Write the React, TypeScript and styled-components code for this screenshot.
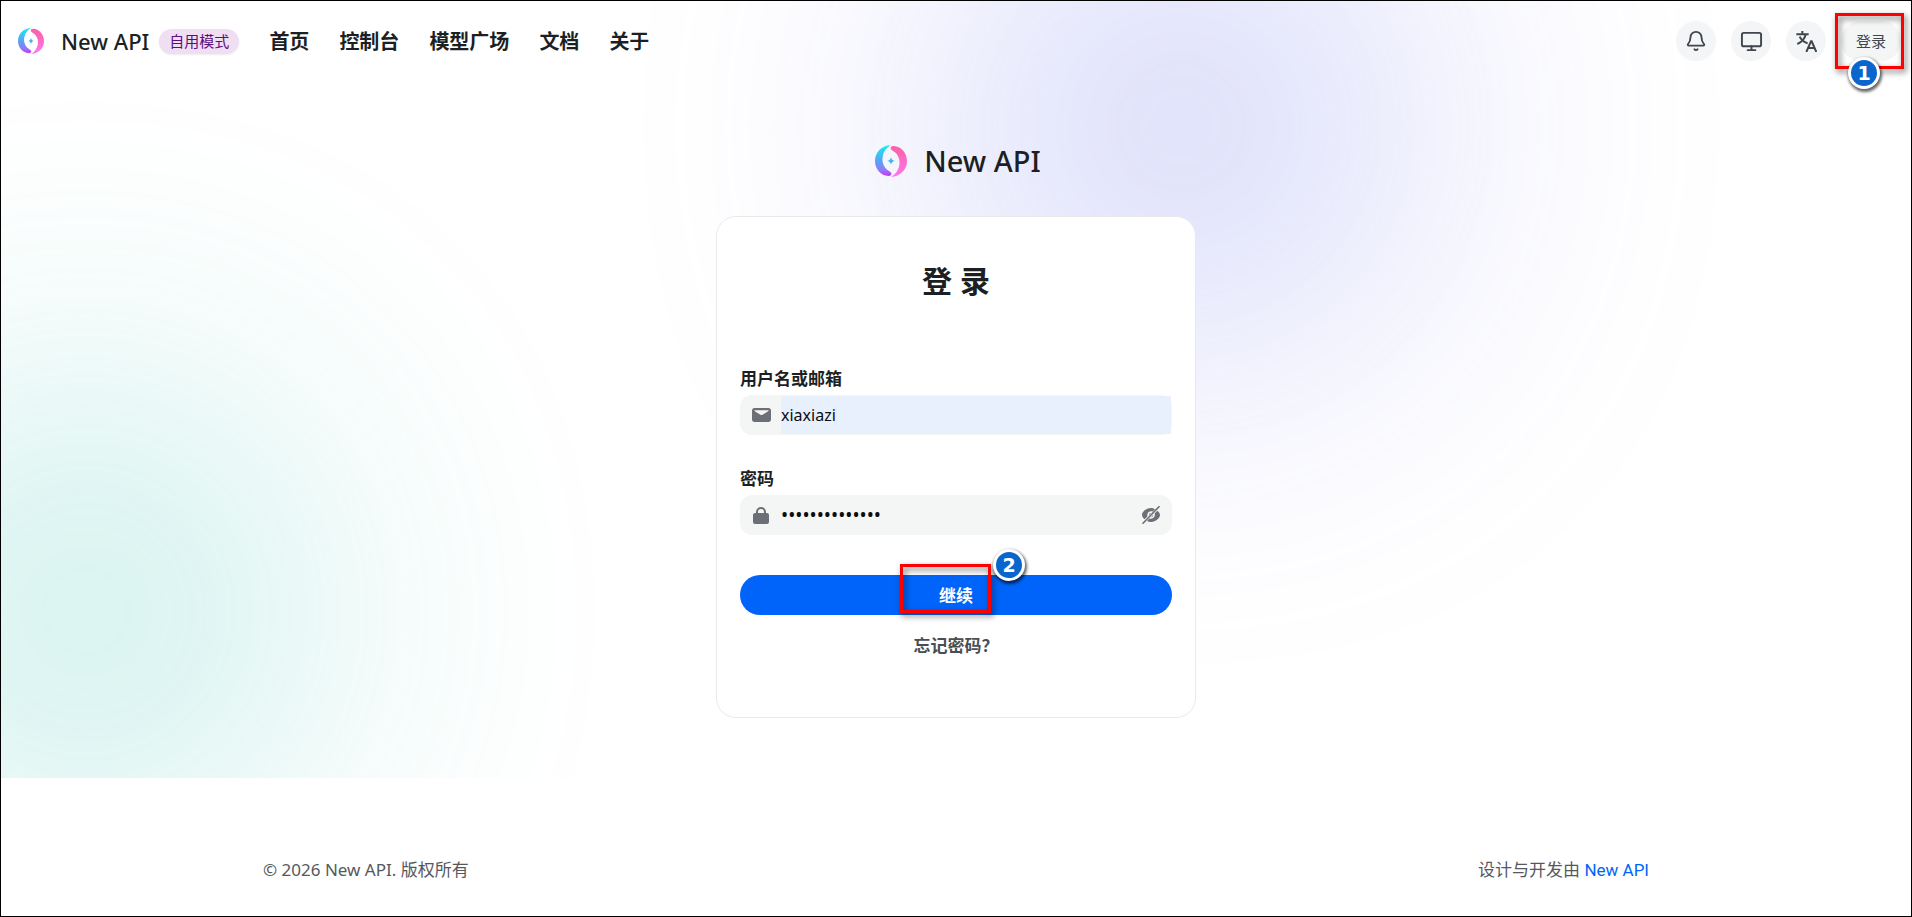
import React, { useId, useState } from 'react';
import styled, { createGlobalStyle } from 'styled-components';
import { Bell, Monitor } from 'lucide-react';

const sans = `'Noto Sans', 'Noto Sans CJK SC', sans-serif`;

const GlobalStyle = createGlobalStyle`
  *, *::before, *::after { box-sizing: border-box; }
  body {
    margin: 0;
    background: #fff;
    color: #1c1f23;
    font-family: ${sans};
    font-size: 17px;
    line-height: 24px;
  }
  button, input { font: inherit; }
`;

const Page = styled.div`
  display: flex;
  flex-direction: column;
  min-height: 100vh;
  border: 1px solid #000;
`;

const Hero = styled.div`
  position: relative;
  isolation: isolate;
  overflow: hidden;
`;

const Glow = styled.div<{ $color: string; $opacity: number; $top: number; $left: string }>`
  position: absolute;
  z-index: -1;
  top: ${(p) => p.$top}px;
  left: ${(p) => p.$left};
  width: 450px;
  height: 450px;
  border-radius: 50%;
  background: ${(p) => p.$color};
  opacity: ${(p) => p.$opacity};
  filter: blur(165px);
  pointer-events: none;
`;

const Header = styled.header`
  display: flex;
  align-items: center;
  justify-content: space-between;
  height: 80px;
  padding: 0 10px;
`;

const HeaderGroup = styled.div`
  display: flex;
  align-items: center;
  gap: 30px;
`;

const Brand = styled.a`
  display: flex;
  align-items: center;
  gap: 10px;
  color: inherit;
  text-decoration: none;
`;

const LogoBox = styled.span`
  display: flex;
  align-items: center;
  justify-content: center;
  width: 40px;
  height: 40px;
`;

const BrandName = styled.span<{ $large?: boolean }>`
  font-size: ${(p) => (p.$large ? 29 : 22)}px;
  line-height: 40px;
  font-weight: 500;
`;

const ModeTag = styled.span`
  padding: 0 10px;
  border-radius: 13px;
  background: #f0dff3;
  box-shadow: 0 1px 2px rgba(0, 0, 0, 0.08);
  color: #5c0d7e;
  font-size: 15px;
  line-height: 25px;
`;

const Nav = styled.nav`
  display: flex;
  gap: 30px;
  padding-top: 2px;
`;

const NavLink = styled.a`
  color: #1c1f23;
  font-size: 20px;
  line-height: 30px;
  font-weight: 700;
  text-decoration: none;
`;

const Actions = styled.div`
  display: flex;
  align-items: center;
  gap: 15px;
`;

const RoundButton = styled.button`
  display: flex;
  align-items: center;
  justify-content: center;
  width: 40px;
  height: 40px;
  padding: 0;
  border: 0;
  border-radius: 50%;
  background: #f3f5f6;
  color: #41464c;
  cursor: pointer;
`;

const LoginButton = styled.button`
  width: 60px;
  height: 40px;
  padding: 0;
  border: 0;
  border-radius: 20px;
  background: #f4f6f5;
  color: #41464c;
  font-size: 15px;
  cursor: pointer;
`;

const Marked = styled.div`
  position: relative;
`;

const MarkFrame = styled.span<{ $inset: string }>`
  position: absolute;
  inset: ${(p) => p.$inset};
  border: 3px solid #f00;
  filter: drop-shadow(2px 3px 3px rgba(0, 0, 0, 0.6));
  pointer-events: none;
`;

const MarkBadge = styled.span<{ $top: number; $left: string }>`
  position: absolute;
  top: ${(p) => p.$top}px;
  left: ${(p) => p.$left};
  width: 32px;
  height: 32px;
  border: 3px solid #fff;
  border-radius: 50%;
  background: #0a66cc;
  box-shadow: 1px 2px 3px 1px rgba(0, 0, 0, 0.6);
  color: #fff;
  font-family: 'DejaVu Sans', sans-serif;
  font-size: 19px;
  line-height: 26px;
  font-weight: 700;
  text-align: center;
  pointer-events: none;
`;

const Main = styled.main`
  display: flex;
  flex-direction: column;
  align-items: center;
  padding: 60px 16px;
`;

const Masthead = styled.div`
  display: flex;
  align-items: center;
  gap: 13px;
  margin-bottom: 35px;
`;

const Card = styled.section`
  width: 100%;
  max-width: 480px;
  padding: 44px 23px 59px;
  border: 1px solid #e9eaec;
  border-radius: 20px;
  background: #fff;
`;

const Title = styled.h1`
  margin: 0 0 66px;
  font-size: 30px;
  line-height: 40px;
  font-weight: 700;
  text-align: center;
`;

const Form = styled.form`
  display: flex;
  flex-direction: column;
`;

const Field = styled.div`
  display: flex;
  flex-direction: column;
  gap: 4px;
  margin-bottom: 32px;
`;

const Label = styled.label`
  font-weight: 700;
`;

const InputShell = styled.div`
  display: flex;
  align-items: center;
  height: 40px;
  padding: 1px;
  border-radius: 12px;
  background: #f4f6f5;
`;

const Prefix = styled.span`
  display: flex;
  justify-content: center;
  width: 40px;
  color: #6c6f75;
`;

const TextInput = styled.input<{ $filled?: boolean }>`
  flex: 1;
  min-width: 0;
  height: 38px;
  padding: 0;
  border: 0;
  outline: 0;
  background: ${(p) => (p.$filled ? '#e8f0fe' : 'transparent')};
  color: #0c0d0e;
  font-size: ${(p) => (p.type === 'password' ? 19 : 16)}px;
`;

const EyeButton = styled.button`
  display: flex;
  align-items: center;
  justify-content: center;
  width: 40px;
  height: 38px;
  padding: 0;
  border: 0;
  background: none;
  color: #6c6f75;
  cursor: pointer;
`;

const SubmitButton = styled.button`
  display: block;
  width: 100%;
  height: 40px;
  padding: 2px 0 0;
  border: 0;
  border-radius: 20px;
  background: #0064fa;
  color: #fff;
  font-weight: 700;
  cursor: pointer;
`;

const SubmitRow = styled(Marked)`
  margin-top: 8px;
`;

const ForgotLink = styled.a`
  align-self: center;
  margin-top: 19px;
  color: #4a4e53;
  font-weight: 700;
  text-decoration: none;
`;

const Footer = styled.footer`
  display: flex;
  justify-content: space-between;
  width: 100%;
  max-width: 1386px;
  margin: 0 auto;
  padding: 80px 0 32px;
  color: #55595e;
`;

const FooterLink = styled.a`
  color: #0064fa;
  font-family: Roboto, sans-serif;
  text-decoration: none;
`;

function Logo({ size }: { size: number }) {
  const id = useId();
  const half =
    'M48 0C20 1 0 22 0 48C0 73 18 92 40 93C47 93 51 88 48 83C45 78 37 77 31 69C23 58 21 46 23 35C26 19 36 6 48 0Z';
  return (
    <svg width={size} height={size} viewBox="0 0 96 96" aria-hidden="true">
      <defs>
        <linearGradient id={`${id}l`} x1="0" y1="0" x2="0" y2="1">
          <stop offset="0" stopColor="#14f0f0" />
          <stop offset="0.55" stopColor="#5f9df5" />
          <stop offset="0.8" stopColor="#8f7df5" />
          <stop offset="1" stopColor="#cc33f5" />
        </linearGradient>
        <linearGradient id={`${id}r`} x1="0" y1="0" x2="0" y2="1">
          <stop offset="0" stopColor="#ff78f0" />
          <stop offset="1" stopColor="#fb5fa5" />
        </linearGradient>
      </defs>
      <path d={half} fill={`url(#${id}l)`} />
      <path d={half} fill={`url(#${id}r)`} transform="rotate(180 48 48)" />
      <path d="M48 36Q49 47 60 48Q49 49 48 60Q47 49 36 48Q47 47 48 36Z" fill="#3fb4f2" />
    </svg>
  );
}

function TranslateIcon() {
  return (
    <svg width="21" height="21" viewBox="0 0 63 63" fill="none" stroke="currentColor" strokeWidth="6" aria-hidden="true">
      <path d="M19 0V7M1 10H38M29 11C26 22 17 33 4 39M11 17C15 26 23 33 35 37" />
      <path d="M31 63L45 31H47L61 63M36 51H56" />
    </svg>
  );
}

function MailIcon() {
  return (
    <svg width="19" height="14" viewBox="0 0 19 14" fill="currentColor" aria-hidden="true">
      <path
        fillRule="evenodd"
        d="M2.5 0H16.500C17.900 0 19 1.100 19 2.500V11.500C19 12.900 17.900 14 16.500 14H2.500C1.100 14 0 12.900 0 11.500V2.500C0 1.100 1.100 0 2.500 0ZM2.600 2.200C2.300 2.500 2.400 2.900 2.800 3.200L8.500 6.700Q9.500 7.300 10.500 6.700L16.200 3.200C16.600 2.900 16.700 2.500 16.400 2.200Z"
      />
    </svg>
  );
}

function LockIcon() {
  return (
    <svg width="16" height="17" viewBox="0 0 16 17" aria-hidden="true">
      <rect y="6" width="16" height="11" rx="2" fill="currentColor" />
      <path d="M4 7V5A4 4 0 0 1 12 5V7" fill="none" stroke="currentColor" strokeWidth="2" />
    </svg>
  );
}

function EyeClosedIcon() {
  return (
    <svg width="20" height="18" viewBox="0 0 20 18" aria-hidden="true">
      <path
        d="M14 3.200C12.800 2.500 11.400 2.100 10 2.100C5 2.100 1 6 1 9C1 10.400 2 12 3.600 13.300L6.400 10.300C5.600 6.700 8.600 4.300 11.600 5.500Z"
        fill="currentColor"
      />
      <path
        d="M16.300 4.700C18 6 19 7.600 19 9C19 12 15 15.900 10 15.900C8.500 15.900 7.200 15.500 6 15L8.400 12.400C11.500 13.600 14.600 11 13.700 7.500Z"
        fill="currentColor"
      />
      <path d="M7.800 9.200C7.800 7.800 8.800 7 10 7ZM12.300 9C12.300 10.300 11.400 11.200 10 11.300Z" fill="currentColor" />
      <path d="M2 17.300L18 0.700" stroke="currentColor" strokeWidth="1.600" strokeLinecap="round" />
    </svg>
  );
}

const navItems = ['首页', '控制台', '模型广场', '文档', '关于'];

export default function App() {
  const [username, setUsername] = useState('xiaxiazi');
  const [password, setPassword] = useState('xiaxiazi123456');
  const [visible, setVisible] = useState(false);

  return (
    <>
      <GlobalStyle />
      <Page>
        <Hero>
          <Glow $color="#7d84ee" $opacity={0.35} $top={-100} $left="50%" />
          <Glow $color="#14b8a6" $opacity={0.24} $top={385} $left="-140px" />

          <Header>
            <HeaderGroup>
              <Brand href="#">
                <LogoBox>
                  <Logo size={26} />
                </LogoBox>
                <BrandName>New API</BrandName>
                <ModeTag>自用模式</ModeTag>
              </Brand>
              <Nav>
                {navItems.map((item) => (
                  <NavLink key={item} href="#">
                    {item}
                  </NavLink>
                ))}
              </Nav>
            </HeaderGroup>
            <Actions>
              <RoundButton type="button" aria-label="通知">
                <Bell size={22} strokeWidth={2} />
              </RoundButton>
              <RoundButton type="button" aria-label="主题">
                <Monitor size={23} strokeWidth={2} />
              </RoundButton>
              <RoundButton type="button" aria-label="语言">
                <TranslateIcon />
              </RoundButton>
              <Marked>
                <LoginButton type="button">登录</LoginButton>
                <MarkFrame $inset="-8px -3px -8px -6px" />
                <MarkBadge $top={36} $left="7px">1</MarkBadge>
              </Marked>
            </Actions>
          </Header>

          <Main>
            <Masthead>
              <LogoBox>
                <Logo size={32} />
              </LogoBox>
              <BrandName $large>New API</BrandName>
            </Masthead>
            <Card>
              <Title>登 录</Title>
              <Form onSubmit={(e) => e.preventDefault()}>
                <Field>
                  <Label htmlFor="username">用户名或邮箱</Label>
                  <InputShell>
                    <Prefix>
                      <MailIcon />
                    </Prefix>
                    <TextInput
                      id="username"
                      type="text"
                      $filled
                      value={username}
                      onChange={(e) => setUsername(e.target.value)}
                    />
                  </InputShell>
                </Field>
                <Field>
                  <Label htmlFor="password">密码</Label>
                  <InputShell>
                    <Prefix>
                      <LockIcon />
                    </Prefix>
                    <TextInput
                      id="password"
                      type={visible ? 'text' : 'password'}
                      value={password}
                      onChange={(e) => setPassword(e.target.value)}
                    />
                    <EyeButton type="button" aria-label="显示密码" onClick={() => setVisible(!visible)}>
                      <EyeClosedIcon />
                    </EyeButton>
                  </InputShell>
                </Field>
                <SubmitRow>
                  <SubmitButton type="submit">继续</SubmitButton>
                  <MarkFrame $inset="-11px calc(50% - 35px) 2px calc(50% - 56px)" />
                  <MarkBadge $top={-26} $left="calc(50% + 37px)">2</MarkBadge>
                </SubmitRow>
                <ForgotLink href="#">忘记密码？</ForgotLink>
              </Form>
            </Card>
          </Main>
        </Hero>

        <Footer>
          <span>© 2026 New API. 版权所有</span>
          <span>
            设计与开发由 <FooterLink href="#">New API</FooterLink>
          </span>
        </Footer>
      </Page>
    </>
  );
}
